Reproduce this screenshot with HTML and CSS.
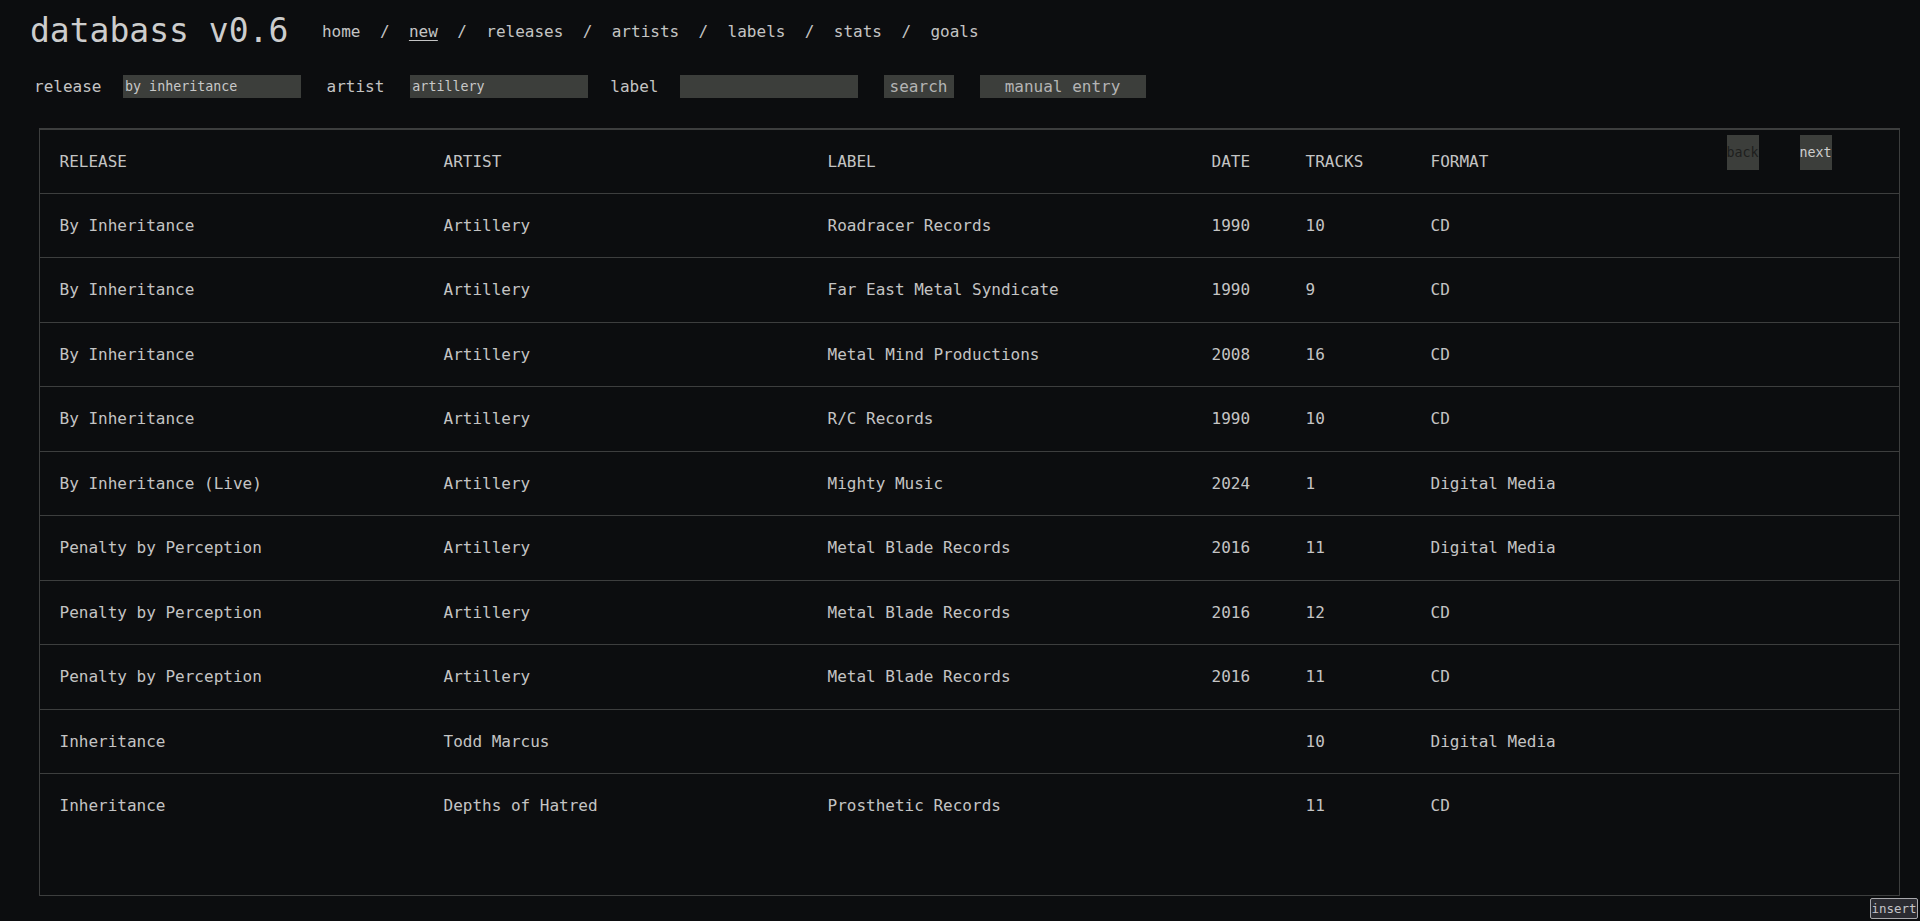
FILE: index.html
```html
<!DOCTYPE html>
<html lang="en">
<head>
<meta charset="utf-8">
<title>databass v0.6</title>
<link rel="stylesheet" href="styles.css">
</head>
<body>
<header class="top">
  <h1 class="logo">databass v0.6</h1>
  <nav class="nav">
    <a class="nav-link" href="#">home</a><span class="sep">/</span>
    <a class="nav-link current" href="#">new</a><span class="sep">/</span>
    <a class="nav-link" href="#">releases</a><span class="sep">/</span>
    <a class="nav-link" href="#">artists</a><span class="sep">/</span>
    <a class="nav-link" href="#">labels</a><span class="sep">/</span>
    <a class="nav-link" href="#">stats</a><span class="sep">/</span>
    <a class="nav-link" href="#">goals</a>
  </nav>
</header>

<form class="search">
  <label class="lbl lbl-release">release</label>
  <input class="field" type="text" value="by inheritance">
  <label class="lbl lbl-artist">artist</label>
  <input class="field" type="text" value="artillery">
  <label class="lbl lbl-label">label</label>
  <input class="field" type="text" value="">
  <button class="btn btn-search" type="button">search</button>
  <button class="btn btn-manual" type="button">manual entry</button>
</form>

<section class="results">
  <table class="grid">
    <colgroup>
      <col class="c-release"><col class="c-artist"><col class="c-label"><col class="c-date"><col class="c-tracks"><col class="c-format"><col class="c-back"><col class="c-next">
    </colgroup>
    <thead>
      <tr>
        <th>RELEASE</th><th>ARTIST</th><th>LABEL</th><th>DATE</th><th>TRACKS</th><th>FORMAT</th>
        <th class="pager"><button class="pg pg-back" type="button">back</button></th>
        <th class="pager"><button class="pg pg-next" type="button">next</button></th>
      </tr>
    </thead>
    <tbody>
      <tr><td>By Inheritance</td><td>Artillery</td><td>Roadracer Records</td><td>1990</td><td>10</td><td>CD</td><td></td><td></td></tr>
      <tr><td>By Inheritance</td><td>Artillery</td><td>Far East Metal Syndicate</td><td>1990</td><td>9</td><td>CD</td><td></td><td></td></tr>
      <tr><td>By Inheritance</td><td>Artillery</td><td>Metal Mind Productions</td><td>2008</td><td>16</td><td>CD</td><td></td><td></td></tr>
      <tr><td>By Inheritance</td><td>Artillery</td><td>R/C Records</td><td>1990</td><td>10</td><td>CD</td><td></td><td></td></tr>
      <tr><td>By Inheritance (Live)</td><td>Artillery</td><td>Mighty Music</td><td>2024</td><td>1</td><td>Digital Media</td><td></td><td></td></tr>
      <tr><td>Penalty by Perception</td><td>Artillery</td><td>Metal Blade Records</td><td>2016</td><td>11</td><td>Digital Media</td><td></td><td></td></tr>
      <tr><td>Penalty by Perception</td><td>Artillery</td><td>Metal Blade Records</td><td>2016</td><td>12</td><td>CD</td><td></td><td></td></tr>
      <tr><td>Penalty by Perception</td><td>Artillery</td><td>Metal Blade Records</td><td>2016</td><td>11</td><td>CD</td><td></td><td></td></tr>
      <tr><td>Inheritance</td><td>Todd Marcus</td><td></td><td></td><td>10</td><td>Digital Media</td><td></td><td></td></tr>
      <tr><td>Inheritance</td><td>Depths of Hatred</td><td>Prosthetic Records</td><td></td><td>11</td><td>CD</td><td></td><td></td></tr>
    </tbody>
  </table>
</section>

<button class="insert" type="button">insert</button>
</body>
</html>
```

FILE: styles.css
```css
html, body {
  margin: 0;
  padding: 0;
  background: #0c0d0f;
  color: #c4c4c4;
  font-family: "DejaVu Sans Mono", "Liberation Mono", monospace;
  font-size: 16px;
  height: 100%;
  overflow: hidden;
}

.top {
  display: flex;
  align-items: center;
  padding: 12px 0 0 30px;
}

.logo {
  margin: 0;
  font-size: 33px;
  line-height: 38px;
  font-weight: normal;
  color: #cdcdcd;
}

.nav {
  display: flex;
  align-items: center;
  gap: 19.4px;
  margin-left: 33.7px;
  line-height: 19px;
}

.nav-link {
  color: #c4c4c4;
  text-decoration: none;
}

.nav-link.current {
  text-decoration: underline;
  text-underline-offset: 3px;
}

.sep {
  color: #c4c4c4;
}

.search {
  display: flex;
  align-items: center;
  margin: 25px 0 0 34px;
  height: 23px;
}

.lbl {
  color: #c4c4c4;
}

.lbl-release { margin-right: 21.6px; }
.lbl-artist { margin-left: 25.5px; margin-right: 26px; }
.lbl-label { margin-left: 22px; margin-right: 21px; }

.field {
  box-sizing: border-box;
  width: 178px;
  height: 23px;
  margin: 0;
  padding: 0 2px;
  border: none;
  outline: none;
  background: #3c3e3b;
  color: #c8c8c8;
  font-family: "DejaVu Sans Mono", "Liberation Mono", monospace;
  font-size: 13.33px;
}

.btn {
  box-sizing: border-box;
  height: 23px;
  margin: 0 0 0 26px;
  border: none;
  background: #3c3e3b;
  color: #b4b4b4;
  font-family: "DejaVu Sans Mono", "Liberation Mono", monospace;
  font-size: 16px;
  line-height: 23px;
  cursor: pointer;
}

.btn-search { width: 70px; padding: 0; }
.btn-manual { width: 166px; padding: 0; }

.results {
  box-sizing: border-box;
  margin: 30px 20px 0 39px;
  height: 768px;
  border: 1px solid #3d3e3e;
  border-top: 2px solid #3d3e3e;
  overflow: hidden;
}

.grid {
  width: 100%;
  border-collapse: collapse;
  table-layout: fixed;
}

.c-release { width: 384px; }
.c-artist { width: 384px; }
.c-label { width: 384px; }
.c-date { width: 94px; }
.c-tracks { width: 125px; }
.c-format { width: 296px; }
.c-back { width: 73px; }
.c-next { width: auto; }

.grid th,
.grid td {
  padding: 23px 0 22.95px 19.5px;
  text-align: left;
  font-weight: normal;
  line-height: 17.5px;
  white-space: nowrap;
  overflow: hidden;
  color: #c4c4c4;
  border-bottom: 1px solid #3d3e3e;
}

.grid thead th {
  padding-top: 22.5px;
  padding-bottom: 23px;
}

.grid tbody tr:last-child td {
  border-bottom: none;
}

.grid th.pager {
  vertical-align: top;
  padding: 5px 0 0 19.5px;
}

.pg {
  display: block;
  width: 32px;
  height: 35px;
  padding: 0;
  margin: 0;
  border: none;
  background: #3c3e3b;
  font-family: "DejaVu Sans Mono", "Liberation Mono", monospace;
  font-size: 13.33px;
  line-height: 35px;
  text-align: center;
  overflow: visible;
  white-space: nowrap;
  cursor: pointer;
}

.pg-back { color: #1e1f1e; }
.pg-next { color: #cfcfcf; }

.insert {
  position: fixed;
  right: 2px;
  bottom: 2px;
  box-sizing: border-box;
  width: 48px;
  height: 21px;
  padding: 0;
  border: 1px solid #a8a8ac;
  border-radius: 2px;
  background: #2b2b31;
  color: #c4c4c8;
  font-family: "DejaVu Sans Mono", "Liberation Mono", monospace;
  font-size: 12.5px;
  line-height: 19px;
  text-align: center;
  cursor: pointer;
}
```
